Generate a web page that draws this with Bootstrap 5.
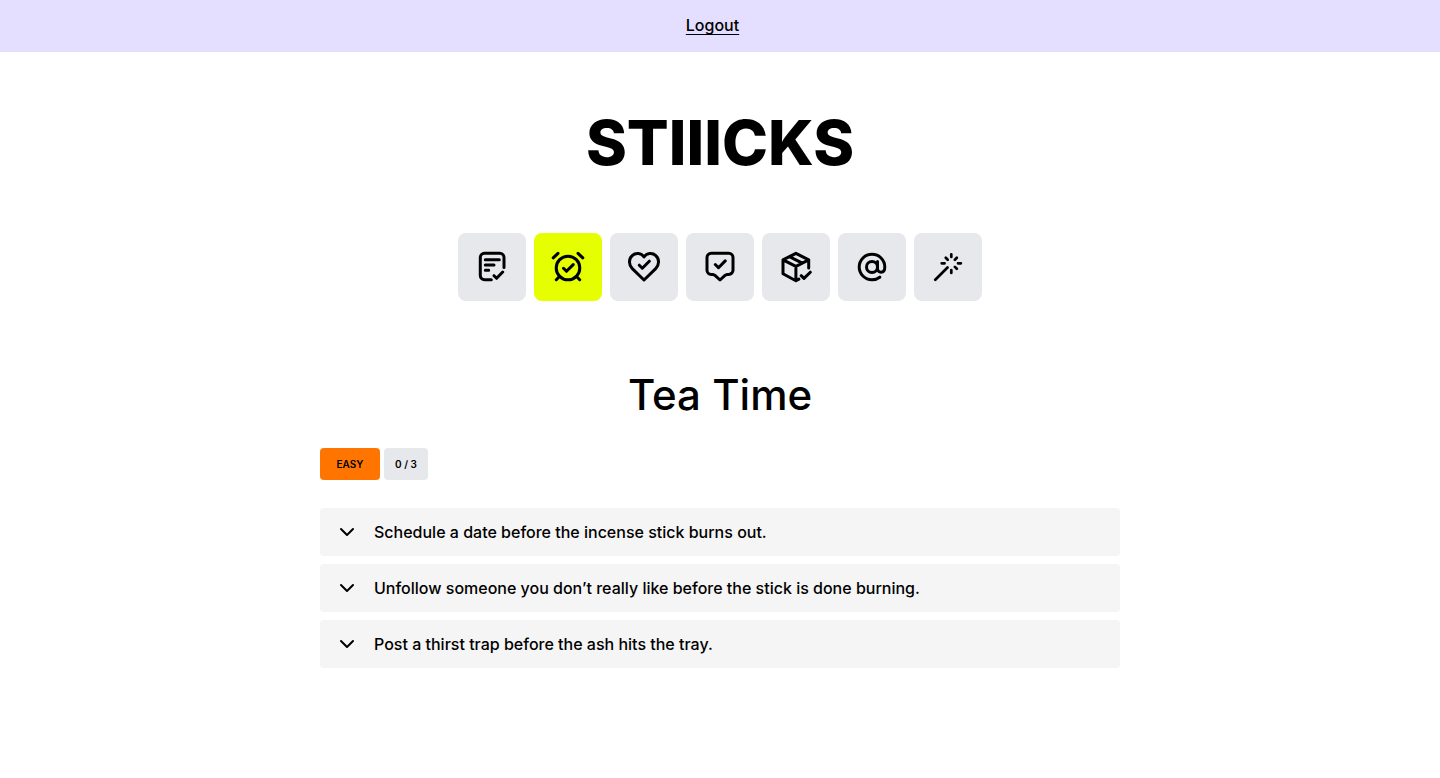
<!DOCTYPE html>
<html lang="en">
<head>
<meta charset="utf-8">
<meta name="viewport" content="width=device-width, initial-scale=1">
<title>STIIICKS – Tea Time</title>
<link href="https://cdn.jsdelivr.net/npm/bootstrap@5.3.0/dist/css/bootstrap.min.css" rel="stylesheet">
<style>
body { font-family: Inter, "Liberation Sans", sans-serif; font-weight: 500; color: #000; background: #fff; }
.topbar { background: #e4dfff; min-height: 52px; padding-bottom: 2px; }
.topbar a { color: #000; text-underline-offset: 3px; margin-right: 15px; }
.brand { font-weight: 800; font-size: 62px; line-height: 72px; margin-top: 55px; }
.brand a { color: #000; }
.tiles { margin-top: 54px; }
.tile { width: 68px; height: 68px; background: #e7e8ec; border: 0; border-radius: 8px; color: #000; }
.tile.active { background: #e5ff00; }
.icon { fill: none; stroke: currentColor; stroke-width: 3; stroke-linecap: round; stroke-linejoin: round; }
.chevron { stroke-width: 2; }
.category { font-size: 42px; line-height: 51px; font-weight: 500; margin-top: 68px; }
.quests { max-width: 800px; }
.tag { height: 32px; border-radius: 4px; font-size: 10px; font-weight: 600; line-height: 16px; }
.tag-level { background: #ff7500; width: 60px; }
.tag-count { background: #e7e8ec; width: 44px; }
.quest { background: #f5f5f5; border: 0; border-radius: 4px; min-height: 48px; padding: 12px 20px; gap: 20px; font-weight: 500; color: #000; }
</style>
</head>
<body>
<header class="topbar d-flex align-items-center justify-content-center">
  <a href="#">Logout</a>
</header>
<main class="container-fluid d-flex flex-column align-items-center">
  <div class="brand"><a class="text-decoration-none" href="#">STIIICKS</a></div>

  <nav class="tiles d-flex flex-wrap justify-content-center gap-2" aria-label="Categories">
    <button type="button" class="tile d-flex align-items-center justify-content-center p-0" aria-label="Tasks">
      <svg class="icon" width="36" height="36" viewBox="0 0 36 36"><path d="M17.3 30.7H10.5a4.2 4.2 0 0 1-4.2-4.2V8.5a4.2 4.2 0 0 1 4.2-4.2h15.3a4.2 4.2 0 0 1 4.2 4.2v10M11.3 10.7h14M11.3 16h8.7M11.3 21.3h3.4M20 26.7l2.6 2.6 6.1-6.3"/></svg>
    </button>
    <button type="button" class="tile active d-flex align-items-center justify-content-center p-0" aria-label="Time" aria-pressed="true">
      <svg class="icon" width="36" height="36" viewBox="0 0 36 36"><circle cx="18" cy="19" r="11.8"/><path d="M13.5 19.3l3 3 6.7-6.7M3.2 8.8L8 4.3M32.8 8.8L28 4.3M9.7 27.3l-3.4 3.4M26.3 27.3l3.4 3.4"/></svg>
    </button>
    <button type="button" class="tile d-flex align-items-center justify-content-center p-0" aria-label="Love">
      <svg class="icon" width="36" height="36" viewBox="0 0 36 36"><path d="M18 31L6.3 19.6C2.6 15.8 2.5 10 6.2 6.6 9.8 3.3 15.3 4 18 8c2.7-4 8.2-4.7 11.8-1.4 3.7 3.4 3.6 9.2-.1 13zM13.3 16.2l3 3 7-7"/></svg>
    </button>
    <button type="button" class="tile d-flex align-items-center justify-content-center p-0" aria-label="Messages">
      <svg class="icon" width="36" height="36" viewBox="0 0 36 36"><path d="M9.2 4.3h17.6A4.2 4.2 0 0 1 31 8.5v12.7a4.2 4.2 0 0 1-4.2 4.2h-1.6a3 3 0 0 0-2.2 1L18 31l-5-4.600a3 3 0 0 0-2.200-1H9.200A4.200 4.200 0 0 1 5 21.200V8.500A4.200 4.200 0 0 1 9.200 4.300zM13.300 15.500l3.200 3.200 6.700-6.800"/></svg>
    </button>
    <button type="button" class="tile d-flex align-items-center justify-content-center p-0" aria-label="Packages">
      <svg class="icon" width="36" height="36" viewBox="0 0 36 36"><path d="M30.700 19V10.800L17.900 4.300 5 10.800v14L17.900 31.700l3-1.600M5 10.800l12.900 6.500 12.800-6.500M17.900 17.300v14.400M11.400 7.600l12.900 6.500M23.200 26.700l2.800 2.700 6.300-6.200"/></svg>
    </button>
    <button type="button" class="tile d-flex align-items-center justify-content-center p-0" aria-label="Social">
      <svg class="icon" width="36" height="36" viewBox="0 0 36 36"><circle cx="18" cy="18" r="5.500"/><path d="M23.500 12.500v7.300a3.500 3.500 0 0 0 3.500 3.500c2.200 0 3.800-1.800 3.800-5.300A12.800 12.800 0 1 0 18 30.800c3 0 5.400-.8 7.800-2.600"/></svg>
    </button>
    <button type="button" class="tile d-flex align-items-center justify-content-center p-0" aria-label="Magic">
      <svg class="icon" width="36" height="36" viewBox="0 0 36 36"><path d="M5.300 30.700L17.500 18.500M21.300 5.300v2.600M21.300 21v2.900M11.700 14.300h2.900M28 14.300h2.900M15.800 8.800l1.900 1.900M26.800 8.800l-1.900 1.900M24.900 17.900l1.900 1.900" stroke-width="2.700"/></svg>
    </button>
  </nav>

  <h1 class="category mb-0">Tea Time</h1>

  <section class="quests w-100">
    <div class="d-flex gap-1 mt-4 pt-1">
      <span class="tag tag-level d-flex align-items-center justify-content-center">EASY</span>
      <span class="tag tag-count d-flex align-items-center justify-content-center">0 / 3</span>
    </div>
    <div class="d-flex flex-column gap-2 mt-4 pt-1">
      <button type="button" class="quest d-flex align-items-center w-100 text-start" aria-expanded="false">
        <svg class="icon chevron flex-shrink-0" width="14" height="10" viewBox="0 0 14 10" aria-hidden="true"><path d="M1 2l6 6 6-6"/></svg>
        <span>Schedule a date before the incense stick burns out.</span>
      </button>
      <button type="button" class="quest d-flex align-items-center w-100 text-start" aria-expanded="false">
        <svg class="icon chevron flex-shrink-0" width="14" height="10" viewBox="0 0 14 10" aria-hidden="true"><path d="M1 2l6 6 6-6"/></svg>
        <span>Unfollow someone you don’t really like before the stick is done burning.</span>
      </button>
      <button type="button" class="quest d-flex align-items-center w-100 text-start" aria-expanded="false">
        <svg class="icon chevron flex-shrink-0" width="14" height="10" viewBox="0 0 14 10" aria-hidden="true"><path d="M1 2l6 6 6-6"/></svg>
        <span>Post a thirst trap before the ash hits the tray.</span>
      </button>
    </div>
  </section>
</main>
<script src="https://cdn.jsdelivr.net/npm/bootstrap@5.3.0/dist/js/bootstrap.bundle.min.js"></script>
</body>
</html>
